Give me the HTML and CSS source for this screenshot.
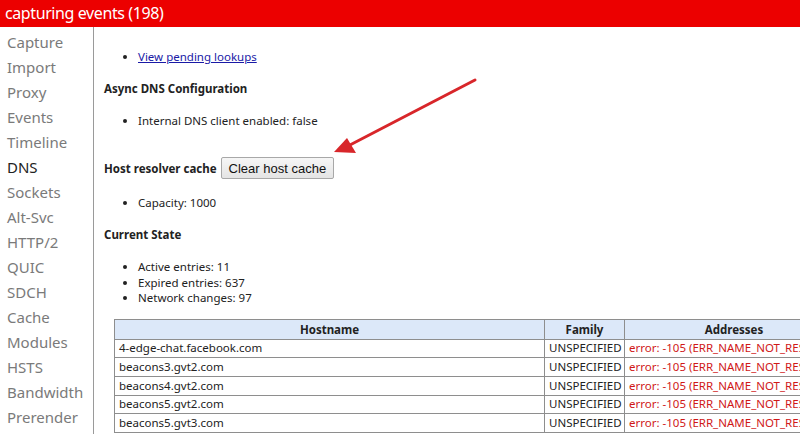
FILE: index.html
```html
<!DOCTYPE html>
<html>
<head>
<meta charset="utf-8">
<link rel="stylesheet" href="styles.css">
</head>
<body>
<div class="header">capturing events (198)</div>
<div class="main">
  <nav class="sidebar">
    <div class="tab">Capture</div>
    <div class="tab">Import</div>
    <div class="tab">Proxy</div>
    <div class="tab">Events</div>
    <div class="tab">Timeline</div>
    <div class="tab active">DNS</div>
    <div class="tab">Sockets</div>
    <div class="tab">Alt-Svc</div>
    <div class="tab">HTTP/2</div>
    <div class="tab">QUIC</div>
    <div class="tab">SDCH</div>
    <div class="tab">Cache</div>
    <div class="tab">Modules</div>
    <div class="tab">HSTS</div>
    <div class="tab">Bandwidth</div>
    <div class="tab">Prerender</div>
  </nav>
  <section class="content">
    <ul class="list first">
      <li><a href="#">View pending lookups</a></li>
    </ul>
    <h4 class="heading">Async DNS Configuration</h4>
    <ul class="list">
      <li>Internal DNS client enabled: false</li>
    </ul>
    <div class="resolver">
      <span class="label">Host resolver cache</span>
      <button class="btn">Clear host cache</button>
    </div>
    <ul class="list">
      <li>Capacity: 1000</li>
    </ul>
    <h4 class="heading">Current State</h4>
    <ul class="list tight">
      <li>Active entries: 11</li>
      <li>Expired entries: 637</li>
      <li>Network changes: 97</li>
    </ul>
    <table class="cache">
      <thead>
        <tr><th class="c-host">Hostname</th><th class="c-fam">Family</th><th class="c-addr">Addresses</th></tr>
      </thead>
      <tbody>
        <tr><td>4-edge-chat.facebook.com</td><td>UNSPECIFIED</td><td class="err">error: -105 (ERR_NAME_NOT_RESOLVED)</td></tr>
        <tr><td>beacons3.gvt2.com</td><td>UNSPECIFIED</td><td class="err">error: -105 (ERR_NAME_NOT_RESOLVED)</td></tr>
        <tr><td>beacons4.gvt2.com</td><td>UNSPECIFIED</td><td class="err">error: -105 (ERR_NAME_NOT_RESOLVED)</td></tr>
        <tr><td>beacons5.gvt2.com</td><td>UNSPECIFIED</td><td class="err">error: -105 (ERR_NAME_NOT_RESOLVED)</td></tr>
        <tr><td>beacons5.gvt3.com</td><td>UNSPECIFIED</td><td class="err">error: -105 (ERR_NAME_NOT_RESOLVED)</td></tr>
      </tbody>
    </table>
  </section>
</div>
<svg class="arrow" width="800" height="434" viewBox="0 0 800 434">
  <line x1="475" y1="80" x2="348" y2="146" stroke="#d8262a" stroke-width="3" stroke-linecap="round"/>
  <polygon points="334,152 347,138 356,153" fill="#d8262a"/>
</svg>
</body>
</html>
```

FILE: styles.css
```css
html, body {
  margin: 0;
  padding: 0;
  width: 800px;
  height: 434px;
  overflow: hidden;
  background: #fff;
}
body {
  font-family: "Noto Sans", "Open Sans", sans-serif;
  color: #222;
  position: relative;
}
.header {
  height: 27px;
  background: #ec0000;
  color: #fff;
  font-size: 16px;
  letter-spacing: -0.4px;
  line-height: 26px;
  padding-left: 5px;
  box-sizing: border-box;
}
.main {
  display: flex;
  height: 407px;
}
.sidebar {
  width: 94px;
  flex: none;
  border-right: 1px solid #9a9a9a;
  padding-top: 3px;
  box-sizing: border-box;
}
.tab {
  font-size: 15px;
  line-height: 25px;
  color: #7a7a7a;
  padding-left: 7px;
  white-space: nowrap;
}
.tab.active {
  color: #222;
}
.content {
  flex: 1;
  padding-left: 10px;
  font-size: 11.5px;
  min-width: 0;
}
.list {
  margin: 16px 0 0 0;
  padding-left: 34px;
  line-height: 16px;
}
.list.first {
  margin-top: 22px;
}
.list.tight {
  line-height: 15.5px;
}
.list a {
  color: #1a1aa6;
}
.heading {
  margin: 16px 0 0 0;
  font-size: 11.5px;
  line-height: 16px;
  font-weight: bold;
}
.resolver {
  margin-top: 28px;
  display: flex;
  align-items: center;
  gap: 4px;
  height: 22px;
}
.label {
  font-weight: bold;
}
.btn {
  font-family: "Liberation Sans", Arial, sans-serif;
  font-size: 13px;
  color: #111;
  height: 22px;
  padding: 0 7px;
  border: 1px solid #a8a8a8;
  border-radius: 2px;
  background: linear-gradient(#f6f6f6, #e4e4e4);
}
.cache {
  margin: 13px 0 0 10px;
  border-collapse: collapse;
  table-layout: fixed;
  width: 720px;
  font-size: 11.5px;
}
.cache th, .cache td {
  border: 1px solid #8e8e8e;
  padding: 0 4px;
  white-space: nowrap;
  overflow: hidden;
  text-align: left;
}
.cache th {
  background: #dce8f9;
  height: 19px;
  text-align: center;
  font-weight: bold;
}
.cache td {
  height: 17.7px;
  line-height: 16px;
}
.c-host { width: 421px; }
.c-fam { width: 71px; }
.c-addr { width: 210px; }
.cache td.err {
  color: #d01818;
}
.arrow {
  position: absolute;
  left: 0;
  top: 0;
  pointer-events: none;
}
```
